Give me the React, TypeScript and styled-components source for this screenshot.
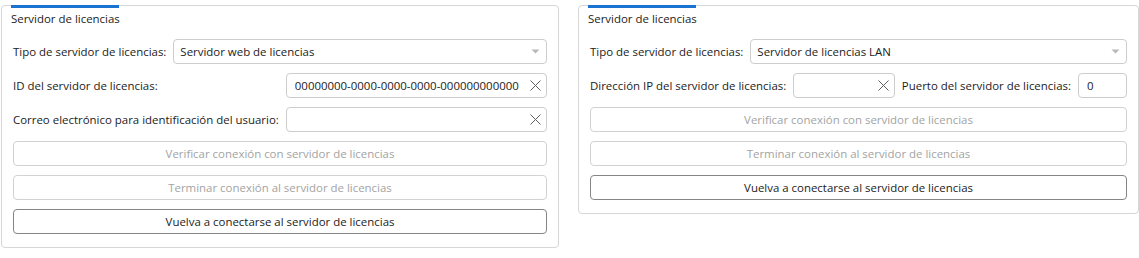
import styled, { createGlobalStyle } from 'styled-components';

const GlobalStyle = createGlobalStyle`
  body {
    margin: 0;
    background: #ffffff;
    font-family: "Open Sans", "Noto Sans", sans-serif;
    font-size: 11.45px;
    color: #1b1b1b;
  }
`;

const Page = styled.div`
  display: flex;
  align-items: flex-start;
  gap: 19px;
  padding: 5px 0 0 1px;
`;

const Panel = styled.section<{ $width?: number }>`
  position: relative;
  box-sizing: border-box;
  ${({ $width }) => ($width ? `width: ${$width}px;` : 'flex: 1;')}
  border: 1px solid #d6d6d6;
  border-radius: 4px;
  padding: 0 11px 13px 11px;
`;

const Tab = styled.div`
  position: absolute;
  top: -1px;
  left: 9px;
  width: 108px;
  height: 3px;
  background: #1a73d0;
`;

const Title = styled.div`
  padding: 5px 0 0 0;
  margin-left: -2px;
  line-height: 16px;
  margin-bottom: 12px;
`;

const Body = styled.div`
  display: flex;
  flex-direction: column;
  gap: 9px;
`;

const Row = styled.div`
  display: flex;
  align-items: center;
  gap: 7px;
`;

const FieldGrid = styled.div`
  display: grid;
  grid-template-columns: auto 1fr;
  align-items: center;
  column-gap: 7px;
  row-gap: 9px;
`;

const Label = styled.span`
  white-space: nowrap;
  line-height: 16px;
`;

const Box = styled.div<{ $width?: number }>`
  box-sizing: border-box;
  height: 25px;
  display: flex;
  align-items: center;
  border: 1px solid #cdcdcd;
  border-radius: 4px;
  background: #ffffff;
  padding: 0 5px 0 8px;
  ${({ $width }) => ($width ? `width: ${$width}px; flex: none;` : 'flex: 1; min-width: 0;')}
`;

const BoxText = styled.span`
  flex: 1;
  white-space: nowrap;
  overflow: hidden;
`;

const Combo = styled(Box)`
  padding: 0 6px 0 6px;
`;

const Button = styled.button<{ $enabled?: boolean }>`
  box-sizing: border-box;
  height: 25px;
  width: 100%;
  border-radius: 4px;
  background: #ffffff;
  font: inherit;
  border: 1px solid ${({ $enabled }) => ($enabled ? '#858585' : '#d2d2d2')};
  color: ${({ $enabled }) => ($enabled ? '#1b1b1b' : '#a3a3a3')};
  padding: 0;
`;

const ClearIcon = () => (
  <svg width="11" height="11" viewBox="0 0 11 11">
    <path d="M0.5 0.5 L10.5 10.5 M10.5 0.5 L0.5 10.5" stroke="#5f5f5f" strokeWidth="1" fill="none" />
  </svg>
);

const ArrowIcon = () => (
  <svg width="9" height="5" viewBox="0 0 9 5">
    <path d="M0.5 0.5 L8.5 0.5 L4.5 4.5 Z" fill="#b8b8b8" />
  </svg>
);

const Buttons = () => (
  <>
    <Button disabled>Verificar conexión con servidor de licencias</Button>
    <Button disabled>Terminar conexión al servidor de licencias</Button>
    <Button $enabled>Vuelva a conectarse al servidor de licencias</Button>
  </>
);

const App = () => (
  <>
    <GlobalStyle />
    <Page>
      <Panel $width={558}>
        <Tab />
        <Title>Servidor de licencias</Title>
        <Body>
          <Row>
            <Label>Tipo de servidor de licencias:</Label>
            <Combo>
              <BoxText>Servidor web de licencias</BoxText>
              <ArrowIcon />
            </Combo>
          </Row>
          <FieldGrid>
            <Label>ID del servidor de licencias:</Label>
            <Box>
              <BoxText>00000000-0000-0000-0000-000000000000</BoxText>
              <ClearIcon />
            </Box>
            <Label>Correo electrónico para identificación del usuario:</Label>
            <Box>
              <BoxText />
              <ClearIcon />
            </Box>
          </FieldGrid>
          <Buttons />
        </Body>
      </Panel>
      <Panel>
        <Tab />
        <Title>Servidor de licencias</Title>
        <Body>
          <Row>
            <Label>Tipo de servidor de licencias:</Label>
            <Combo>
              <BoxText>Servidor de licencias LAN</BoxText>
              <ArrowIcon />
            </Combo>
          </Row>
          <Row>
            <Label>Dirección IP del servidor de licencias:</Label>
            <Box>
              <BoxText />
              <ClearIcon />
            </Box>
            <Label>Puerto del servidor de licencias:</Label>
            <Box $width={49}>
              <BoxText>0</BoxText>
            </Box>
          </Row>
          <Buttons />
        </Body>
      </Panel>
    </Page>
  </>
);

export default App;
